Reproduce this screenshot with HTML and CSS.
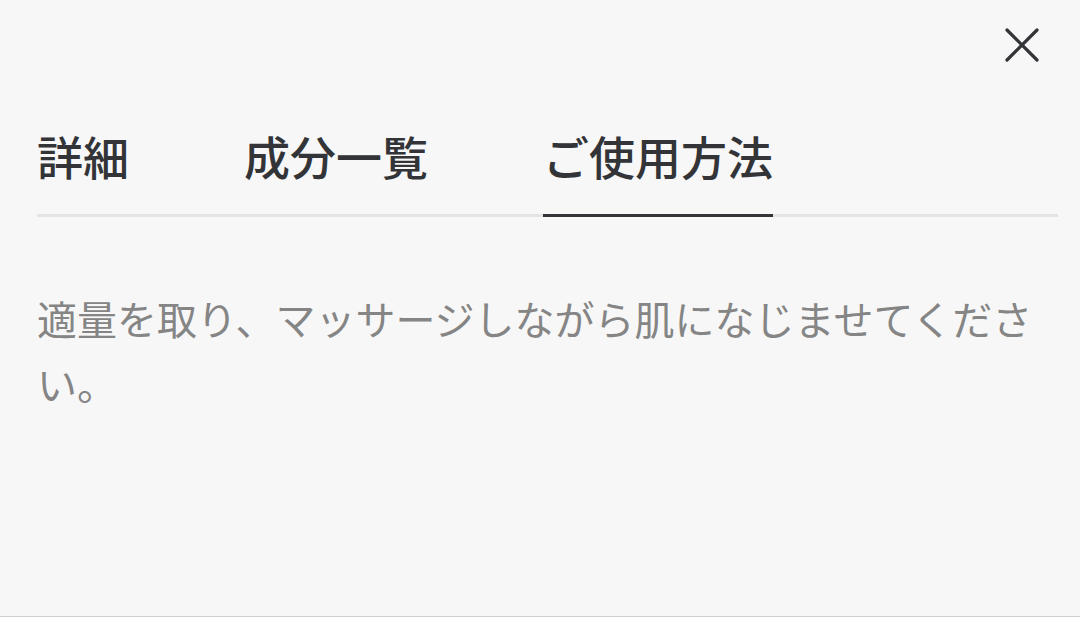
FILE: index.html
```html
<!DOCTYPE html>
<html lang="ja">
<head>
<meta charset="utf-8">
<title>ご使用方法</title>
<link rel="stylesheet" href="styles.css">
</head>
<body>
<div class="sheet">
  <div class="topbar">
    <button class="close" aria-label="閉じる">
      <svg viewBox="0 0 34 34" width="34" height="34">
        <path d="M2 2 L32 32 M32 2 L2 32" stroke="#333438" stroke-width="3.2" stroke-linecap="round" fill="none"/>
      </svg>
    </button>
  </div>
  <div class="tabs">
    <div class="tab">詳細</div>
    <div class="tab">成分一覧</div>
    <div class="tab active">ご使用方法</div>
  </div>
  <p class="content">適量を取り、マッサージしながら肌になじませてください。</p>
</div>
</body>
</html>
```
FILE: styles.css
```css
html, body {
  margin: 0;
  padding: 0;
  background: #f7f7f7;
}
body {
  font-family: "Noto Sans CJK JP", "Noto Sans", sans-serif;
}
.sheet {
  box-sizing: border-box;
  height: 617px;
  padding: 28px 22px 0 37px;
  border-bottom: 1px solid #cfcfcf;
  overflow: hidden;
}
.topbar {
  display: flex;
  justify-content: flex-end;
  padding-right: 19px;
}
.close {
  display: block;
  width: 34px;
  height: 34px;
  padding: 0;
  border: 0;
  background: none;
}
.close svg {
  display: block;
}
.tabs {
  display: flex;
  gap: 115px;
  margin-top: 70px;
  border-bottom: 3px solid #e4e4e4;
}
.tab {
  font-size: 46px;
  line-height: 46px;
  font-weight: 500;
  color: #333438;
  padding-bottom: 36px;
  margin-bottom: -3px;
  border-bottom: 3px solid transparent;
}
.tab.active {
  border-bottom-color: #333438;
}
.content {
  margin: 69px 0 0;
  font-size: 40px;
  line-height: 65px;
  color: #858585;
}
```
